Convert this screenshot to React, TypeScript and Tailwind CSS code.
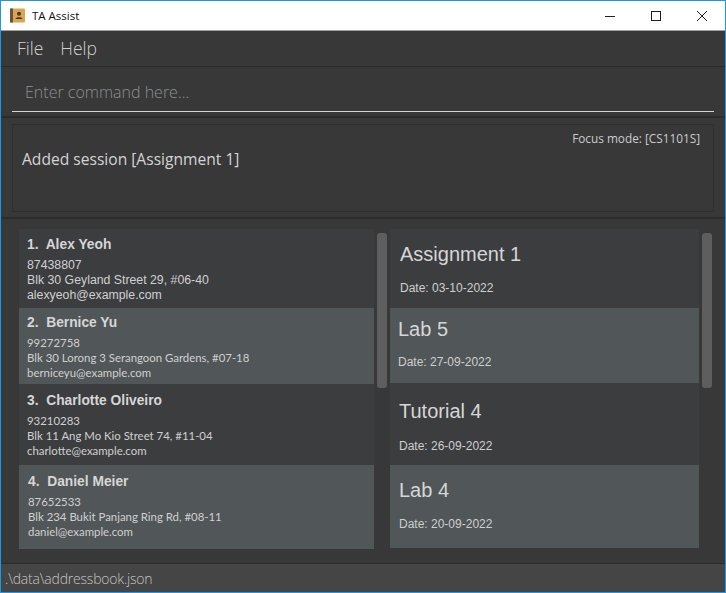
import React from 'react'

const sans = "font-['Open_Sans','Noto_Sans',sans-serif]"
const lato = "font-['Lato','Open_Sans',sans-serif]"
const arial = "font-['Liberation_Sans',Arial,sans-serif]"

const people = [
  { name: '1.  Alex Yeoh', phone: '87438807', address: 'Blk 30 Geyland Street 29, #06-40', email: 'alexyeoh@example.com' },
  { name: '2.  Bernice Yu', phone: '99272758', address: 'Blk 30 Lorong 3 Serangoon Gardens, #07-18', email: 'berniceyu@example.com' },
  { name: '3.  Charlotte Oliveiro', phone: '93210283', address: 'Blk 11 Ang Mo Kio Street 74, #11-04', email: 'charlotte@example.com' },
  { name: '4.  Daniel Meier', phone: '87652533', address: 'Blk 234 Bukit Panjang Ring Rd, #08-11', email: 'daniel@example.com' },
]

const sessions = [
  { title: 'Assignment 1', date: 'Date: 03-10-2022' },
  { title: 'Lab 5', date: 'Date: 27-09-2022' },
  { title: 'Tutorial 4', date: 'Date: 26-09-2022' },
  { title: 'Lab 4', date: 'Date: 20-09-2022' },
]

function AppIcon() {
  return (
    <svg width="15" height="15" viewBox="0 0 15 15">
      <rect x="0" y="0.5" width="15" height="14" rx="1" fill="#d9a552" />
      <rect x="0" y="0.5" width="3" height="14" fill="#6b5140" />
      <circle cx="9" cy="5.8" r="2" fill="#4a3520" />
      <path d="M5.5 11 C5.5 8.6 12.5 8.6 12.5 11 Z" fill="#4a3520" />
    </svg>
  )
}

function Scrollbar() {
  return (
    <div className="w-[10px] shrink-0 pt-[4px]">
      <div className="h-[155px] rounded-[3px] bg-[#5e5e5e]" />
    </div>
  )
}

function PersonCard({ person, index }: { person: (typeof people)[number]; index: number }) {
  const rowHeights = ['h-[79px]', 'h-[76px]', 'h-[81px]', 'h-[84px]']
  const tops = ['pt-[7px]', 'pt-[6px]', 'pt-[8px]', 'pt-[8px]']
  return (
    <div className={`${rowHeights[index]} ${tops[index]} ${index === 3 ? 'pl-[9px]' : 'pl-[8px]'} ${index % 2 ? 'bg-[#515658]' : 'bg-[#3c3d3f]'} text-[#d6d6d6]`}>
      <div className={`${arial} mb-[4px] whitespace-pre text-[13.8px] font-bold leading-[17px]`}>{person.name}</div>
      <div className={`${index === 0 ? `${arial} text-[12.3px] pt-[1px]` : `${lato} text-[11.4px]`} leading-[15px] text-[#d0d0d0]`}>
        <div>{person.phone}</div>
        <div>{person.address}</div>
        <div>{person.email}</div>
      </div>
    </div>
  )
}

function SessionCard({ session, index }: { session: (typeof sessions)[number]; index: number }) {
  const rowHeights = ['h-[79px]', 'h-[75px]', 'h-[82px]', 'h-[83px]']
  const tops = ['pt-[11px]', 'pt-[7px]', 'pt-[14px]', 'pt-[11px]']
  const lefts = ['pl-[10px]', 'pl-[8px]', 'pl-[9px]', 'pl-[9px]']
  const gaps = ['mt-[12px]', 'mt-[11px]', 'mt-[13px]', 'mt-[12px]']
  return (
    <div className={`${rowHeights[index]} ${tops[index]} ${lefts[index]} ${index % 2 ? 'bg-[#515658]' : 'bg-[#3c3d3f]'} ${arial}`}>
      <div className="text-[20px] leading-[28px] text-[#d6d6d6]">{session.title}</div>
      <div className={`${gaps[index]} text-[12px] leading-[16px] text-[#cfcfcf]`}>{session.date}</div>
    </div>
  )
}

export default function App() {
  return (
    <div className={`flex h-[593px] w-[726px] flex-col overflow-hidden border border-[#2196e8] bg-[#383838] ${sans}`}>
      <div className="flex h-[30px] shrink-0 items-center justify-between border-b border-[#a0a0a0] bg-white pl-[9px]">
        <div className="flex items-center gap-[7px]">
          <AppIcon />
          <span className="text-[11.5px] text-[#111]">TA Assist</span>
        </div>
        <div className="flex items-center pr-[17px]">
          <svg width="12" height="12" viewBox="0 0 12 12" className="mr-[34px]" fill="none" stroke="#222" strokeWidth="1">
            <path d="M1 6.5 H11" />
          </svg>
          <svg width="12" height="12" viewBox="0 0 12 12" className="mr-[34px]" fill="none" stroke="#222" strokeWidth="1">
            <rect x="1.5" y="1.5" width="9" height="9" />
          </svg>
          <svg width="12" height="12" viewBox="0 0 12 12" fill="none" stroke="#222" strokeWidth="1">
            <path d="M1 1 L11 11 M11 1 L1 11" />
          </svg>
        </div>
      </div>

      <div className="flex h-[36px] shrink-0 items-center gap-[17px] border-b border-[#2c2c2c] pl-[16px] text-[17.5px] font-light text-[#d0d0d0]">
        <span>File</span>
        <span>Help</span>
      </div>

      <div className="h-[51px] shrink-0 border-b-2 border-[#2c2c2c] px-[11px]">
        <div className="flex h-[45px] w-[702px] items-center border-b border-[#d4d4d4] pl-[13px] pt-[6px] text-[16px] font-light text-[#8c9093]">
          Enter command here...
        </div>
      </div>

      <div className="h-[101px] shrink-0 border-b-2 border-[#2c2c2c] px-[11px] pt-[6px]">
        <div className="h-[88px] w-[702px] border border-[#2f2f2f] pl-[9px] pr-[13px] pt-[5px]">
          <div className="text-right text-[11.8px] leading-[17px] text-[#cccccc]">Focus mode: [CS1101S]</div>
          <div className="mt-[1px] text-[15.6px] leading-[22px] text-[#d4d4d4]">Added session [Assignment 1]</div>
        </div>
      </div>

      <div className="flex min-h-0 flex-1 border-b border-[#2c2c2c] pl-[18px] pt-[10px]">
        <div className="w-[355px] shrink-0">
          {people.map((person, index) => (
            <PersonCard key={person.name} person={person} index={index} />
          ))}
        </div>
        <div className="ml-[3px]">
          <Scrollbar />
        </div>
        <div className="ml-[3px] w-[309px] shrink-0">
          {sessions.map((session, index) => (
            <SessionCard key={session.title} session={session} index={index} />
          ))}
        </div>
        <div className="ml-[3px]">
          <Scrollbar />
        </div>
      </div>

      <div className="flex h-[28px] shrink-0 items-center bg-[#454545] pl-[4px] text-[14px] font-light tracking-[-0.2px] text-[#c4c4c4]">
        .\data\addressbook.json
      </div>
    </div>
  )
}
